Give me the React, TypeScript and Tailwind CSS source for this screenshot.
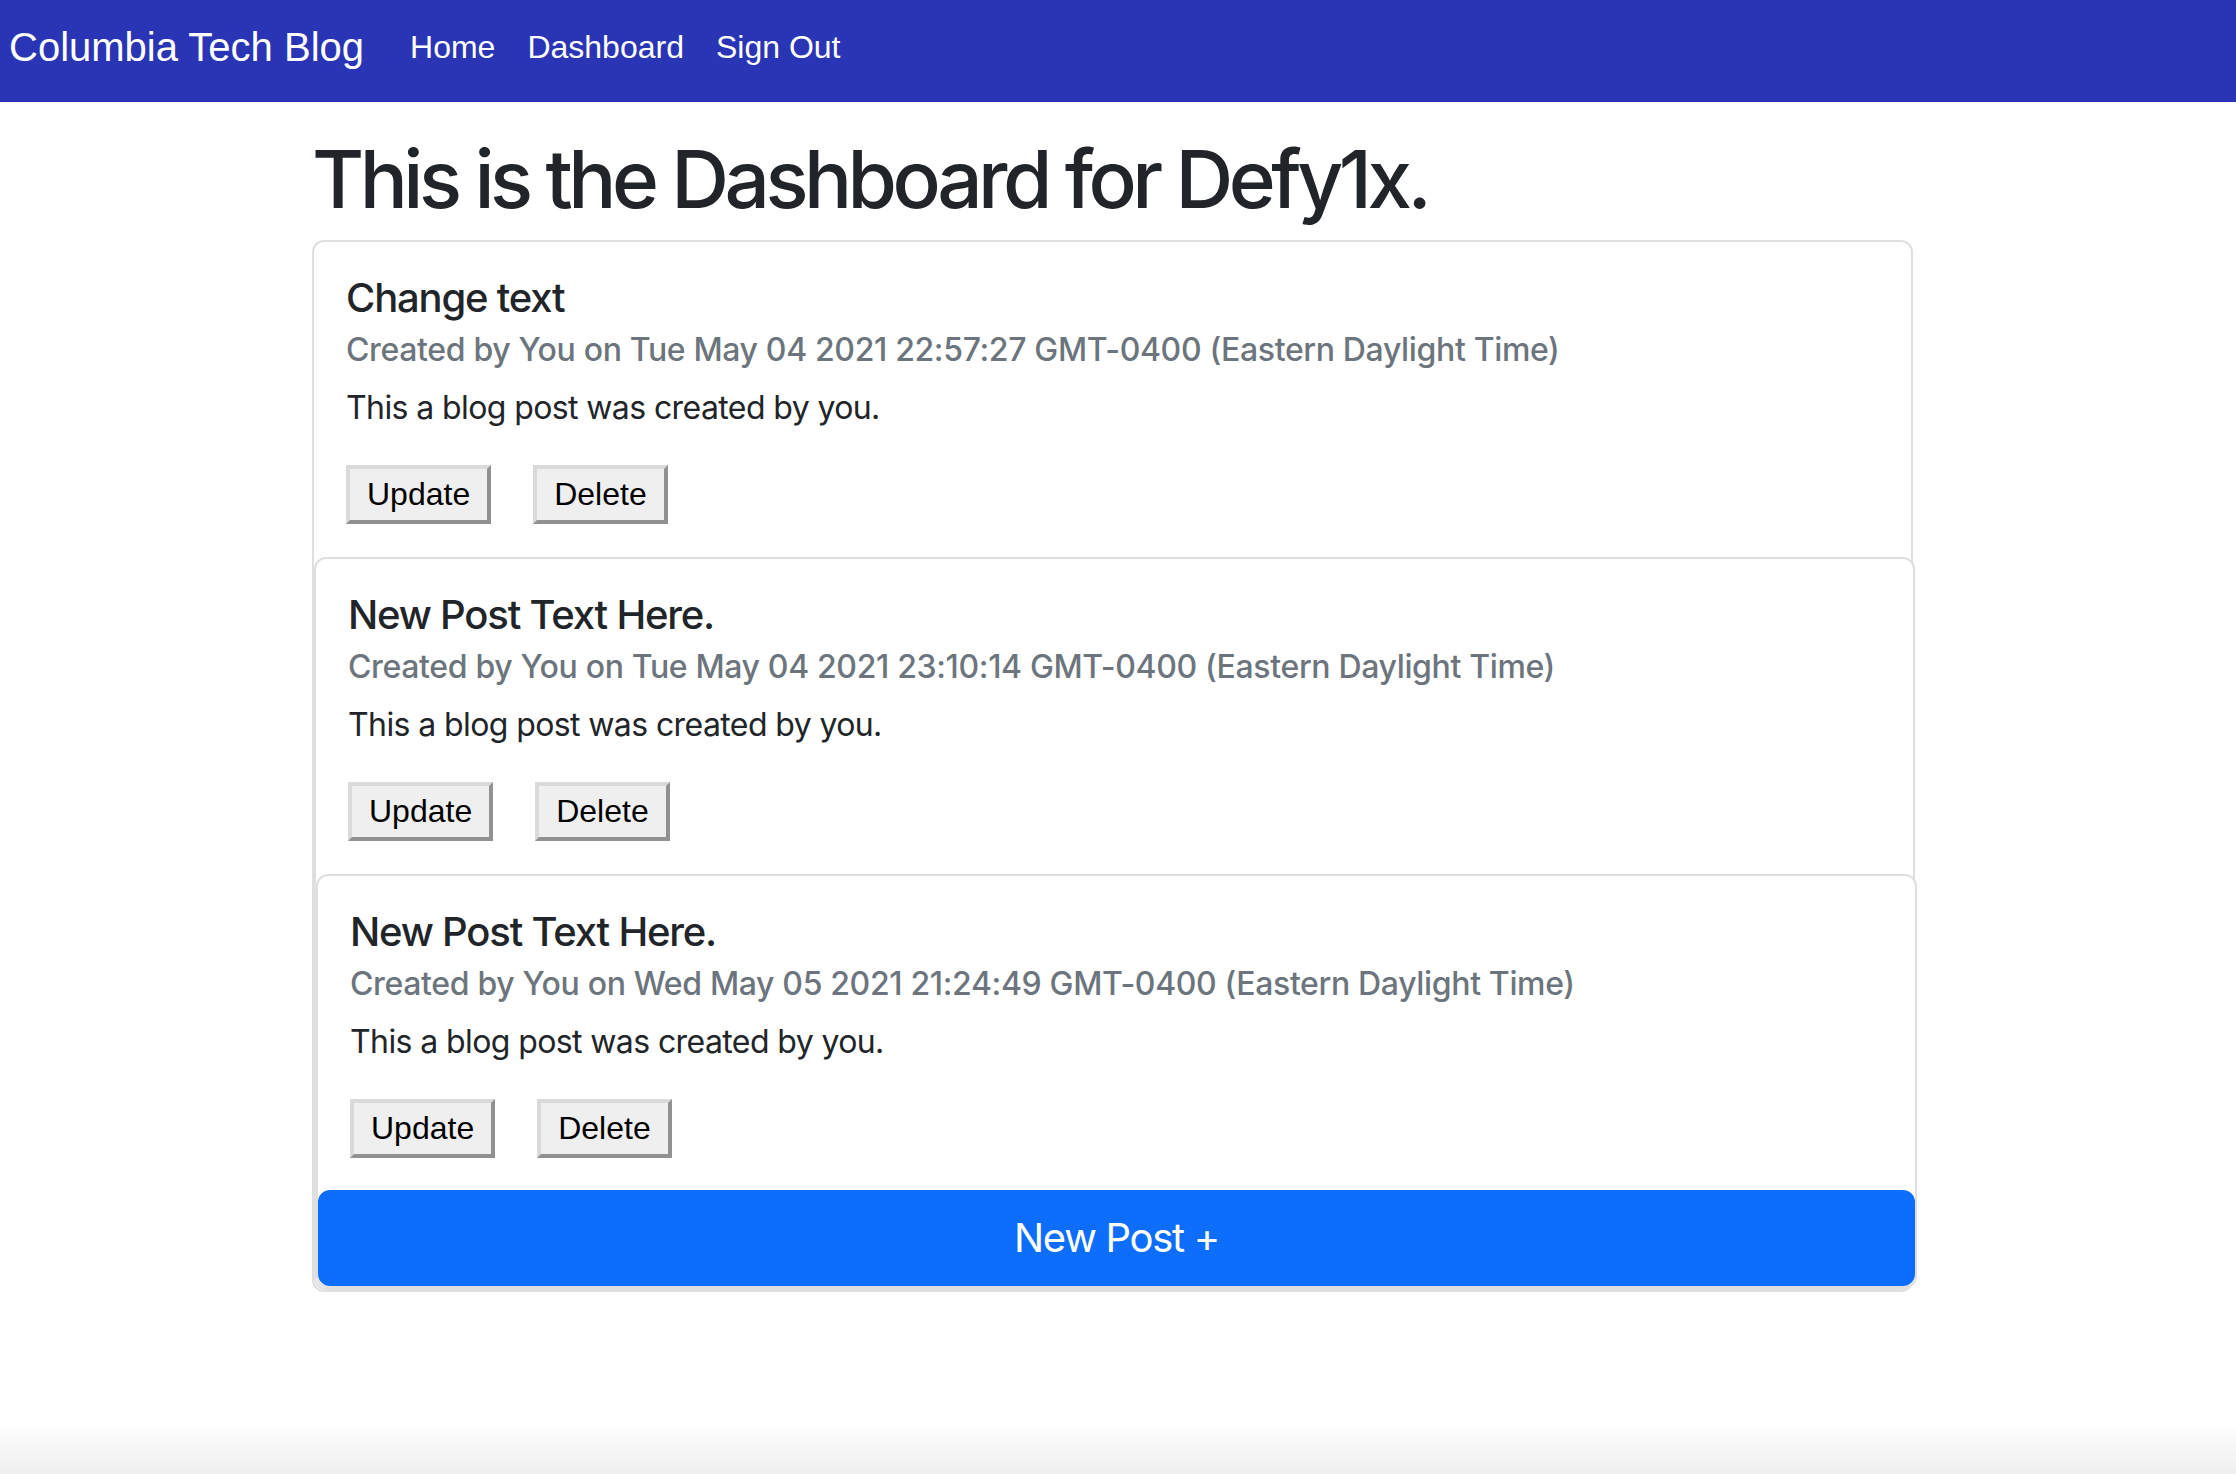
import React from "react";

const posts = [
  { title: "Change text", date: "Tue May 04 2021 22:57:27 GMT-0400 (Eastern Daylight Time)" },
  { title: "New Post Text Here.", date: "Tue May 04 2021 23:10:14 GMT-0400 (Eastern Daylight Time)" },
  { title: "New Post Text Here.", date: "Wed May 05 2021 21:24:49 GMT-0400 (Eastern Daylight Time)" },
];

const sf = "font-['Inter','Noto_Sans',sans-serif]";

function OldButton({ children }: { children: React.ReactNode }) {
  return (
    <button className="font-['Liberation_Sans',Arial,sans-serif] text-[32px] leading-[37px] text-black bg-[#efefef] border-[4px] border-t-[#dadada] border-l-[#dadada] border-b-[#919191] border-r-[#919191] px-[17px] py-[7px]">
      {children}
    </button>
  );
}

function Card({ index }: { index: number }) {
  const p = posts[index];
  const last = index === posts.length - 1;
  return (
    <div className="w-[1601px] border-2 border-[#dfdfdf] rounded-[12px] bg-white">
      <div className={last ? "px-[32px] pt-[32px] pb-[32px]" : "px-[32px] pt-[32px] pb-[33px]"}>
        <h5 className={`${sf} text-[40px] leading-[48px] font-medium tracking-[-1.2px] text-[#212529]`}>{p.title}</h5>
        <h6 className={`${sf} mt-[9px] text-[32px] leading-[38px] font-medium tracking-[-0.35px] text-[#6c757d]`}>
          Created by You on {p.date}
        </h6>
        <p className={`${sf} mt-[15px] text-[32px] leading-[48px] tracking-[-0.6px] text-[#212529]`}>
          This a blog post was created by you.
        </p>
        <div className="mt-[33px] flex gap-[42px]">
          <OldButton>Update</OldButton>
          <OldButton>Delete</OldButton>
        </div>
      </div>
      {last ? (
        <button className={`${sf} block w-full h-[96px] rounded-[12px] bg-[#0d6efd] text-white text-[40px] leading-[60px] tracking-[-1.3px]`}>
          New Post +
        </button>
      ) : (
        <Card index={index + 1} />
      )}
    </div>
  );
}

export default function App() {
  return (
    <div className="min-h-[1474px] flex flex-col bg-white">
      <nav className="h-[102px] bg-[#2a35b5] flex items-center pb-[9px] pl-[9px] font-['Liberation_Sans',Arial,sans-serif] text-white">
        <span className="text-[40px] leading-[60px] mr-[30px]">Columbia Tech Blog</span>
        <a className="text-[32px] leading-[48px] px-[16px]">Home</a>
        <a className="text-[32px] leading-[48px] px-[16px]">Dashboard</a>
        <a className="text-[32px] leading-[48px] px-[16px]">Sign Out</a>
      </nav>
      <main className="pl-[312px]">
        <h1 className={`${sf} mt-[29px] mb-[13px] text-[80px] leading-[96px] font-medium tracking-[-4.5px] text-[#212529]`}>
          This is the Dashboard for Defy1x.
        </h1>
        <Card index={0} />
      </main>
      <div className="mt-auto h-[54px] bg-linear-to-b from-white to-[#efefef]" />
    </div>
  );
}
